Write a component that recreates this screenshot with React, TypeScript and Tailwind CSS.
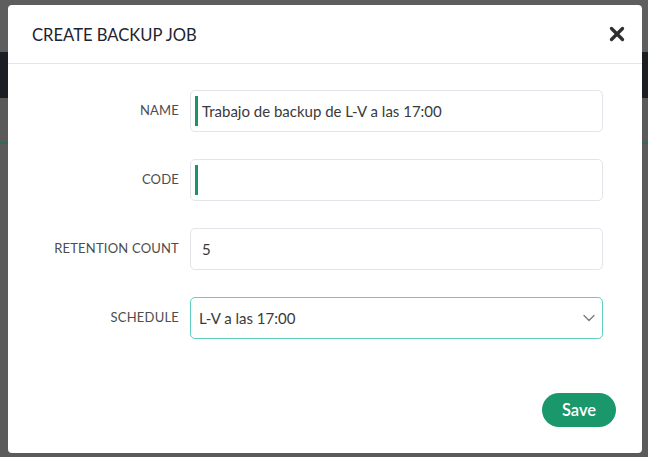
import { ChevronDown, X } from "lucide-react";

const fields = [
  { label: "NAME", value: "Trabajo de backup de L-V a las 17:00", bar: true },
  { label: "CODE", value: "", bar: true },
  { label: "RETENTION COUNT", value: "5", bar: false },
];

export default function App() {
  return (
    <div
      className="relative w-[648px] h-[457px] overflow-hidden bg-[#5b5b5b]"
      style={{ fontFamily: "Lato, 'Open Sans', sans-serif" }}
    >
      {/* dimmed page behind the modal */}
      <div className="flex flex-col">
        <div className="h-[52px] bg-[#5e5e5e]" />
        <div className="h-[46px] bg-[#1b1f24]" />
        <div className="h-[46px] bg-[#5a5a5a] border-b-2 border-[#2f6b4f]" />
      </div>

      <div className="absolute left-[8px] top-[5px] w-[634px] h-[448px] bg-white rounded-[4px] flex flex-col">
        <div className="h-[59px] border-b border-[#e3e5e8] flex items-center justify-between pl-[24px] pr-[14px]">
          <h2 className="text-[16.6px] text-[#1e2430] pt-[2px]">CREATE BACKUP JOB</h2>
          <X className="w-[22px] h-[22px] text-[#2f2f2f]" strokeWidth={3.6} />
        </div>

        <div className="flex flex-col gap-[27px] pt-[26px] pr-[39px]">
          {fields.map((f) => (
            <div key={f.label} className="flex items-center gap-[11px]">
              <label className="w-[171px] text-right text-[13px] text-[#4d4d4d] tracking-[0.2px]">
                {f.label}
              </label>
              <div className="flex-1 h-[42px] border border-[#e2e4ea] rounded-[5px] flex items-center pl-[4px]">
                {f.bar ? (
                  <div className="w-[3px] h-[30px] bg-[#1a9468] mr-[4px]" />
                ) : (
                  <div className="w-[7px]" />
                )}
                <span className="text-[15px] text-[#3a3a3a]">{f.value}</span>
              </div>
            </div>
          ))}
          <div className="flex items-center gap-[11px]">
            <label className="w-[171px] text-right text-[13px] text-[#4d4d4d] tracking-[0.2px]">
              SCHEDULE
            </label>
            <div className="flex-1 h-[42px] border border-[#5fcfc0] rounded-[5px] flex items-center justify-between pl-[8px] pr-[3px]">
              <span className="text-[15px] text-[#3a3a3a]">L-V a las 17:00</span>
              <ChevronDown className="w-[20px] h-[20px] text-[#7a7a7a]" strokeWidth={1.6} />
            </div>
          </div>
        </div>

        <div className="flex justify-end pr-[26px] mt-[54px]">
          <button className="w-[74px] h-[34px] rounded-full bg-[#1a976b] text-white text-[16.5px] font-semibold">
            Save
          </button>
        </div>
      </div>
    </div>
  );
}
